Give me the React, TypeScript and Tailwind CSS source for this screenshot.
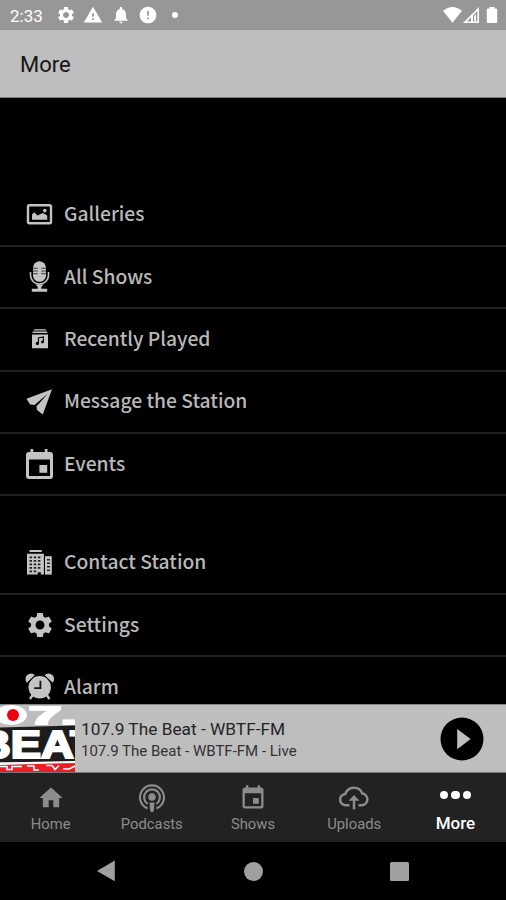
import type { ReactNode } from 'react'
import { MdError, MdEvent, MdHome, MdNotifications, MdSettings, MdWarning } from 'react-icons/md'

function GalleryIcon() {
  return (
    <svg viewBox="0 0 28 32" className="h-8 w-7" fill="currentColor">
      <rect x="3" y="6.3" width="23" height="18" rx="1.5" fill="none" stroke="currentColor" strokeWidth="2.4" />
      <path d="M7 20.8v-5.2l2.2-2.3 3.3 3.3 5.3-2.6 4.4 2.6v4.2z" />
      <circle cx="19.8" cy="11.6" r="1.8" />
    </svg>
  )
}

function MicIcon() {
  return (
    <svg viewBox="0 0 28 32" className="h-8 w-7" fill="currentColor">
      <rect x="8" y="0.3" width="13" height="20.5" rx="6.5" />
      <path d="M8 7.3h4.8M8 10h4.8M8 12.7h4.8M16.2 7.3H21M16.2 10H21M16.2 12.7H21" stroke="#333" strokeWidth="0.9" />
      <path d="M5.5 11v3.3a9 8.8 0 0 0 18 0V11M14.5 23.2v5" fill="none" stroke="currentColor" strokeWidth="1.6" />
      <path d="M10.5 23.5h8L16.3 26v1.8h5.9v3H6.8v-3h5.9V26z" />
    </svg>
  )
}

function RecentIcon() {
  return (
    <svg viewBox="0 0 28 32" className="h-8 w-7" fill="currentColor">
      <path d="M8.9 6.2h12v1.3h-12zM7.6 8.6h14.6v1.5H7.6zM7 11.6h16v13.6H7z" />
      <path d="M13.4 20.2v-5.3l5-1v5" fill="none" stroke="#000" strokeWidth="1.1" />
      <circle cx="12.4" cy="20.4" r="1.6" fill="#000" />
      <circle cx="17.4" cy="19" r="1.4" fill="#000" />
    </svg>
  )
}

function PlaneIcon() {
  return (
    <svg viewBox="0 0 28 32" className="h-8 w-7" fill="currentColor">
      <path d="M27 3.2 1.5 12.8l3.6 5.6 4.4.6L23 7.4 11.4 20.6l.6 3.4 5.8 4.4z" />
    </svg>
  )
}

function CalendarIcon() {
  return (
    <svg viewBox="0 0 28 32" className="h-8 w-7" fill="currentColor">
      <path
        fillRule="evenodd"
        d="M5.5 1h2.7v3h11.6V1h2.7v3H25a3 3 0 0 1 3 3v21a3 3 0 0 1-3 3H4a3 3 0 0 1-3-3V7a3 3 0 0 1 3-3h1.5zM4 11.4V28h21V11.4z"
      />
      <path d="M14.4 17h7.8v7.8h-7.8z" />
    </svg>
  )
}

function BuildingIcon() {
  return (
    <svg viewBox="0 0 28 32" className="h-8 w-7" fill="currentColor">
      <path d="M4.5 2.9h12.3v2H4.5zM2 6.8h17v20.8h-3.2v-2.4h-3v2.4H2z" />
      <path d="M20 9.2h6.8v18.4H20z" />
      <path
        d="M4.5 10.4h2.5M8.7 10.4h2.5M12.9 10.4h2.5M4.5 13.9h2.5M8.7 13.9h2.5M12.9 13.9h2.5M4.5 17.4h2.5M8.7 17.4h2.5M12.9 17.4h2.5M4.5 20.9h2.5M8.7 20.9h2.5M12.9 20.9h2.5M4.5 24.4h2.5M8.7 24.4h2.5M22 12.7h3M22 16.2h3M22 19.7h3M22 23.2h3"
        stroke="#222"
        strokeWidth="1.6"
      />
      <path d="M19.4 8.2v19.4" stroke="#000" strokeWidth="0.9" />
    </svg>
  )
}

function AlarmIcon() {
  return (
    <svg viewBox="0 0 28 32" className="h-8 w-7 overflow-visible" fill="currentColor">
      <circle cx="14.7" cy="16.3" r="11.2" />
      <path d="M2 11.8a5.2 5.2 0 0 1 8-7.6zM27.6 11.8a5.2 5.2 0 0 0-8-7.6z" />
      <path d="M1.8 12.6 10.6 4M27.8 12.6 19 4" stroke="#000" strokeWidth="0.9" />
      <path d="m7.6 24-2.6 4M21.8 24l2.6 4" stroke="currentColor" strokeWidth="2.4" />
      <path d="M15.4 9.8v7.4H9.2" fill="none" stroke="#111" strokeWidth="1.8" />
    </svg>
  )
}

function PodcastIcon() {
  return (
    <svg viewBox="0 0 28 30" className="h-[30px] w-7" fill="none" stroke="currentColor">
      <path d="M9.6 25.5a12 12 0 1 1 8.8 0" strokeWidth="2.1" />
      <path d="M9.6 20.8a7.9 7.9 0 1 1 8.8 0" strokeWidth="2.1" />
      <circle cx="14" cy="14" r="3.7" fill="currentColor" stroke="none" />
      <path d="M11.4 19.5h5.2l-.8 8.3q-.2 1.2-1.8 1.2t-1.8-1.2z" fill="currentColor" stroke="none" />
    </svg>
  )
}

function UploadIcon() {
  return (
    <svg viewBox="0 0 30 26" className="h-[26px] w-[30px]" fill="none" stroke="currentColor" strokeWidth="2.5">
      <path d="M10.5 20.3H7.2a5.7 5.7 0 0 1-.8-11.4 9 9 0 0 1 17-.3 5.9 5.9 0 0 1-.4 11.7h-3.5" />
      <path d="M15 24.3V12.5" />
      <path d="m9.6 15.8 5.4-5.9 5.4 5.9z" fill="currentColor" stroke="none" />
    </svg>
  )
}

const stationItems = [
  { label: 'Galleries', icon: <GalleryIcon /> },
  { label: 'All Shows', icon: <MicIcon /> },
  { label: 'Recently Played', icon: <RecentIcon /> },
  { label: 'Message the Station', icon: <PlaneIcon /> },
  { label: 'Events', icon: <CalendarIcon /> },
]

const appItems = [
  { label: 'Contact Station', icon: <BuildingIcon /> },
  { label: 'Settings', icon: <MdSettings className="-mt-px ml-px size-[30px] shrink-0" /> },
  { label: 'Alarm', icon: <AlarmIcon /> },
]

const tabs = [
  { label: 'Home', icon: <MdHome className="size-[28px]" /> },
  { label: 'Podcasts', icon: <PodcastIcon /> },
  { label: 'Shows', icon: <MdEvent className="size-[28px]" /> },
  { label: 'Uploads', icon: <UploadIcon /> },
]

function MenuRow({ label, icon }: { label: string; icon: ReactNode }) {
  return (
    <li className="flex h-[62.4px] shrink-0 items-center border-b-2 border-[#212121] pl-[25px]">
      <span className="flex w-7 shrink-0 justify-center text-[#c4c4c4]">{icon}</span>
      <span className="mb-[3px] ml-[11px] font-['Noto_Sans_CJK_SC',sans-serif] text-[19.25px] leading-8 font-medium text-[#b9b9b9]">
        {label}
      </span>
    </li>
  )
}

function StatusBar() {
  return (
    <div className="flex h-[30px] shrink-0 items-center bg-[#979797] pl-[10px] text-white">
      <span className="w-[46px] pt-0.5 text-[17px] leading-5">2:33</span>
      <MdSettings className="size-5" />
      <MdWarning className="ml-[7px] size-5" />
      <MdNotifications className="ml-[8px] size-5" />
      <MdError className="ml-[7px] size-5" />
      <span className="ml-[14px] size-[6px] rounded-full bg-white" />
      <svg viewBox="0 0 56 18" className="mr-[7px] ml-auto h-[18px] w-14" fill="currentColor">
        <path d="M0 4.8q9.5-7.6 19 0L9.5 16.7z" />
        <path fillRule="evenodd" d="M20 17 36 1v16zM24 15.4h4V11.3zM30 9.4v6h4.4V5z" />
        <path d="M31.2 10v5.4h1.8V8.2z" />
        <path d="M46.5 1h5v1.6h1.7q1 0 1 1V16q0 1-1 1h-8.4q-1 0-1-1V3.6q0-1 1-1h1.7z" />
      </svg>
    </div>
  )
}

function StationArt() {
  return (
    <svg viewBox="0 0 75 67" className="h-[67px] w-[75px] shrink-0 font-['Liberation_Sans',sans-serif] font-bold">
      <rect width="75" height="67" fill="#bdbdbd" />
      <ellipse cx="11" cy="10" rx="16" ry="10" fill="#fff" />
      <circle cx="13" cy="10" r="6" fill="#f0000f" />
      <text x="29" y="18.5" fontSize="24" fill="#fff" stroke="#fff" strokeWidth="2" textLength="48" lengthAdjust="spacingAndGlyphs">
        7.
      </text>
      <path d="M0 22.5 75 20.5v37H0z" fill="#1c1c1c" />
      <text x="-22" y="53" fontSize="38" fill="#fff" stroke="#fff" strokeWidth="2.2" textLength="120" lengthAdjust="spacingAndGlyphs">
        BEAT
      </text>
      <path d="M0 57.5 75 56v2L0 60z" fill="#fff" />
      <path d="M0 60 75 58v9H0z" fill="#ee1c24" />
      <path d="M0 61.5h7v3h5v-3h10M27 61h7v4h5M46 60.5h6l3 4 4-4M63 64h6l6-3" fill="none" stroke="#fff" strokeWidth="1.6" />
    </svg>
  )
}

function Player() {
  return (
    <div className="flex h-[69px] shrink-0 items-center border-t border-b border-t-[#858585] border-b-[#777] bg-[#bebebe]">
      <StationArt />
      <div className="ml-[6px] flex-1 pt-0.5 whitespace-nowrap">
        <p className="text-[17.3px] leading-[22px] text-[#252525]">107.9 The Beat - WBTF-FM</p>
        <p className="text-[15px] leading-[22px] text-[#333]">107.9 The Beat - WBTF-FM - Live</p>
      </div>
      <svg viewBox="0 0 44 44" className="mr-[22px] size-11 shrink-0">
        <circle cx="22" cy="22" r="21.5" fill="#000" />
        <path d="M17.2 12v20.2L30.6 22z" fill="#bebebe" />
      </svg>
    </div>
  )
}

function TabBar() {
  return (
    <nav className="grid h-[69px] shrink-0 grid-cols-5 bg-[#222] text-[#8c8c8c]">
      {tabs.map((tab) => (
        <div key={tab.label} className="flex flex-col items-center pt-[9px]">
          <span className="flex h-[32px] items-center">{tab.icon}</span>
          <span className="text-[14.8px] leading-5">{tab.label}</span>
        </div>
      ))}
      <div className="flex flex-col items-center pt-2 text-white">
        <span className="flex h-7 items-center gap-[3px]">
          <span className="size-[8.5px] rounded-full bg-white" />
          <span className="size-[8.5px] rounded-full bg-white" />
          <span className="size-[8.5px] rounded-full bg-white" />
        </span>
        <span className="mt-1 text-[17px] leading-5 font-medium">More</span>
      </div>
    </nav>
  )
}

function SystemNav() {
  return (
    <div className="flex h-[58px] shrink-0 items-center justify-between bg-black pr-[97px] pl-[96px] text-[#a0a0a0]">
      <svg viewBox="0 0 20 22" className="h-[22px] w-5" fill="currentColor">
        <path d="M18.8.5v20.8L1 11z" />
      </svg>
      <span className="size-[19px] rounded-full bg-[#a0a0a0]" />
      <span className="size-[19px] rounded-[1.5px] bg-[#a0a0a0]" />
    </div>
  )
}

export default function App() {
  return (
    <div className="flex h-[900px] w-[506px] flex-col overflow-hidden bg-black font-[Roboto,sans-serif]">
      <StatusBar />
      <header className="flex h-[68px] shrink-0 items-center border-b border-[#777] bg-[#bebebe] pt-0.5 pl-5">
        <h1 className="text-[22px] leading-7 text-[#151515]">More</h1>
      </header>
      <main className="min-h-0 flex-1 overflow-hidden pt-[86.5px]">
        <ul>
          {stationItems.map((item) => (
            <MenuRow key={item.label} {...item} />
          ))}
        </ul>
        <ul className="mt-9">
          {appItems.map((item) => (
            <MenuRow key={item.label} {...item} />
          ))}
        </ul>
      </main>
      <Player />
      <TabBar />
      <SystemNav />
    </div>
  )
}
